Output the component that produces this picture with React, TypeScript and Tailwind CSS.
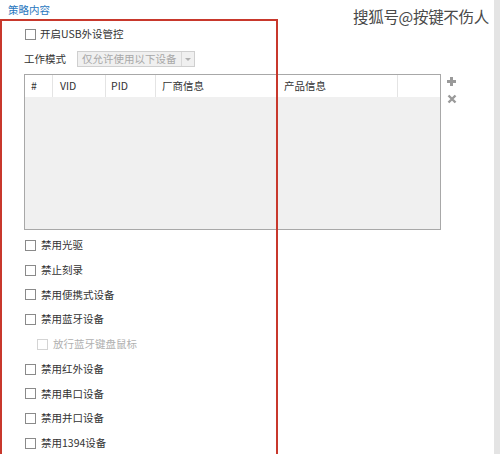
import React from 'react'

const font = { fontFamily: '"Noto Sans CJK SC", "Microsoft YaHei", sans-serif' }

function Check({ label, disabled }: { label: string; disabled?: boolean }) {
  return (
    <div className={`flex items-center h-[24.75px] ${disabled ? 'pl-[12px]' : ''}`}>
      <span
        className={`w-[11px] h-[11px] border bg-white ${disabled ? 'border-[#d4d4d4]' : 'border-[#8a8a8a]'}`}
      />
      <span className={`ml-[5px] text-[10.5px] leading-none ${disabled ? 'text-[#b0b0b0]' : 'text-[#333]'}`}>
        {label}
      </span>
    </div>
  )
}

const opts = ['禁用光驱', '禁止刻录', '禁用便携式设备', '禁用蓝牙设备']
const opts2 = ['禁用红外设备', '禁用串口设备', '禁用并口设备', '禁用1394设备']

export default function App() {
  return (
    <div className="relative w-[500px] h-[454px] overflow-hidden bg-white" style={font}>
      {/* scrollbar */}
      <div className="absolute right-0 top-0 w-[6px] h-full bg-[#e4e4e4]" />

      {/* watermark */}
      <div className="absolute left-[353px] top-[5px] text-[15.5px] text-[#4a4a4a] tracking-[-0.3px] whitespace-nowrap">
        搜狐号@按键不伤人
      </div>

      {/* red annotation */}
      <div className="absolute left-0 top-[19px] w-[278px] h-[460px] border-2 border-[#c8382c] pointer-events-none" />

      <div className="pl-[8px] pt-[3px] text-[10.5px] leading-[14px] text-[#2a78c0]">策略内容</div>

      <div className="pl-[25px] pt-[11px]">
        <div className="flex items-center h-[12px]">
          <span className="w-[11px] h-[11px] border border-[#8a8a8a] bg-white" />
          <span className="ml-[4px] text-[10.5px] leading-none text-[#333]">开启USB外设管控</span>
        </div>

        <div className="flex items-center mt-[11px] h-[16px]">
          <span className="text-[10.5px] leading-none text-[#333] -ml-[1px] whitespace-nowrap">工作模式</span>
          <div className="ml-[11px] w-[118px] h-[16px] border border-[#cfcfcf] bg-[#f0f0f0] flex">
            <span className="flex-1 pl-[4px] text-[10.5px] leading-[14px] text-[#a8a8a8] whitespace-nowrap">仅允许使用以下设备</span>
            <span className="w-[13px] border-l border-[#d8d8d8] flex items-center justify-center">
              <span className="block w-0 h-0 border-l-[3px] border-r-[3px] border-t-[3px] border-l-transparent border-r-transparent border-t-[#b0b0b0]" />
            </span>
          </div>
        </div>

        <div className="flex mt-[7px]">
          <div className="-ml-[1px] w-[417px] h-[156px] border border-[#a8a8a8] bg-[#f0f0f0] flex flex-col">
            <div className="flex h-[22px] bg-white text-[10.5px] text-[#333] leading-[22px] whitespace-nowrap">
              <div className="w-[28px] pl-[6px] border-r border-[#e4e4e4]">#</div>
              <div className="w-[53px] pl-[7px] border-r border-[#e4e4e4]">VID</div>
              <div className="w-[50px] pl-[5px] border-r border-[#e4e4e4]">PID</div>
              <div className="w-[121px] pl-[6px] border-r border-[#e4e4e4]">厂商信息</div>
              <div className="w-[121px] pl-[7px] border-r border-[#e4e4e4]">产品信息</div>
              <div className="flex-1" />
            </div>
          </div>
          <div className="ml-[5px] flex flex-col items-center w-[11px] pt-[2px] gap-[7px]">
            <svg width="11" height="11" viewBox="0 0 11 11">
              <path d="M5.5 1v9M1 5.5h9" stroke="#9a9a9a" strokeWidth="3" />
            </svg>
            <svg width="10" height="10" viewBox="0 0 10 10">
              <path d="M1.5 1.5l7 7M8.5 1.5l-7 7" stroke="#9a9a9a" strokeWidth="2.4" />
            </svg>
          </div>
        </div>

        <div className="mt-[3px]">
          {opts.map(o => <Check key={o} label={o} />)}
          <Check label="放行蓝牙键盘鼠标" disabled />
          {opts2.map(o => <Check key={o} label={o} />)}
        </div>
      </div>
    </div>
  )
}
